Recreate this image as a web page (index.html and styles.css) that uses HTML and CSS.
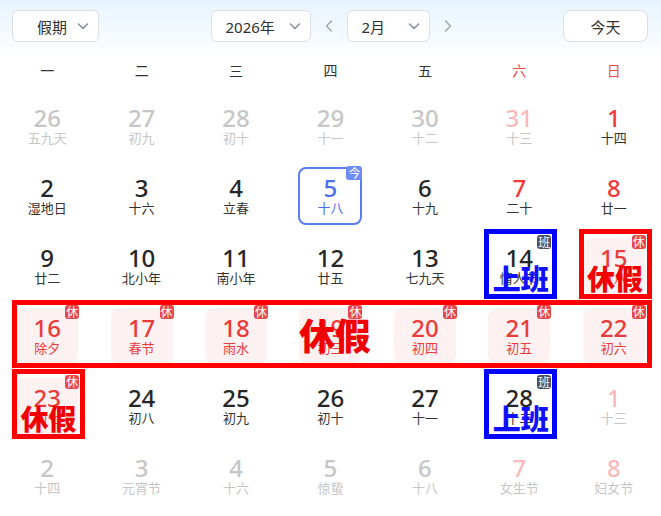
FILE: index.html
```html
<!DOCTYPE html>
<html lang="zh-CN">
<head>
<meta charset="utf-8">
<title>日历</title>
<link rel="stylesheet" href="styles.css">
</head>
<body>
<div class="page">
  <div class="toolbar">
    <div class="select sel-holiday"><span>假期</span><svg class="chev" viewBox="0 0 12 12"><polyline points="1.5,4 6,8.5 10.5,4"/></svg></div>
    <div class="nav">
      <div class="select sel-year"><span>2026年</span><svg class="chev" viewBox="0 0 12 12"><polyline points="1.5,4 6,8.5 10.5,4"/></svg></div>
      <svg class="arrow" viewBox="0 0 8 14"><polyline points="6.5,2 1.5,7 6.5,12"/></svg>
      <div class="select sel-month"><span>2月</span><svg class="chev" viewBox="0 0 12 12"><polyline points="1.5,4 6,8.5 10.5,4"/></svg></div>
      <svg class="arrow" viewBox="0 0 8 14"><polyline points="1.5,2 6.5,7 1.5,12"/></svg>
    </div>
    <div class="today-btn">今天</div>
  </div>

  <div class="weekdays">
    <div>一</div><div>二</div><div>三</div><div>四</div><div>五</div><div class="we">六</div><div class="we">日</div>
  </div>

  <div class="week">
    <div class="cell other"><div class="box"><div class="num">26</div><div class="lun">五九天</div></div></div>
    <div class="cell other"><div class="box"><div class="num">27</div><div class="lun">初九</div></div></div>
    <div class="cell other"><div class="box"><div class="num">28</div><div class="lun">初十</div></div></div>
    <div class="cell other"><div class="box"><div class="num">29</div><div class="lun">十一</div></div></div>
    <div class="cell other"><div class="box"><div class="num">30</div><div class="lun">十二</div></div></div>
    <div class="cell other weekend"><div class="box"><div class="num">31</div><div class="lun">十三</div></div></div>
    <div class="cell weekend"><div class="box"><div class="num">1</div><div class="lun">十四</div></div></div>
  </div>

  <div class="week">
    <div class="cell"><div class="box"><div class="num">2</div><div class="lun">湿地日</div></div></div>
    <div class="cell"><div class="box"><div class="num">3</div><div class="lun">十六</div></div></div>
    <div class="cell"><div class="box"><div class="num">4</div><div class="lun">立春</div></div></div>
    <div class="cell today"><div class="box"><div class="num">5</div><div class="lun">十八</div><span class="badge b-today">今</span></div></div>
    <div class="cell"><div class="box"><div class="num">6</div><div class="lun">十九</div></div></div>
    <div class="cell weekend"><div class="box"><div class="num">7</div><div class="lun">二十</div></div></div>
    <div class="cell weekend"><div class="box"><div class="num">8</div><div class="lun">廿一</div></div></div>
  </div>

  <div class="week">
    <div class="cell"><div class="box"><div class="num">9</div><div class="lun">廿二</div></div></div>
    <div class="cell"><div class="box"><div class="num">10</div><div class="lun">北小年</div></div></div>
    <div class="cell"><div class="box"><div class="num">11</div><div class="lun">南小年</div></div></div>
    <div class="cell"><div class="box"><div class="num">12</div><div class="lun">廿五</div></div></div>
    <div class="cell"><div class="box"><div class="num">13</div><div class="lun">七九天</div></div></div>
    <div class="cell work"><div class="box"><div class="num">14</div><div class="lun">情人节</div><span class="badge b-work">班</span></div><div class="mark mark-work">上班</div></div>
    <div class="cell holiday"><div class="box"><div class="num">15</div><div class="lun">廿八</div><span class="badge b-rest">休</span></div><div class="mark mark-rest">休假</div></div>
  </div>

  <div class="week">
    <div class="cell holiday"><div class="box"><div class="num">16</div><div class="lun">除夕</div><span class="badge b-rest">休</span></div></div>
    <div class="cell holiday"><div class="box"><div class="num">17</div><div class="lun">春节</div><span class="badge b-rest">休</span></div></div>
    <div class="cell holiday"><div class="box"><div class="num">18</div><div class="lun">雨水</div><span class="badge b-rest">休</span></div></div>
    <div class="cell holiday"><div class="box"><div class="num">19</div><div class="lun">初三</div><span class="badge b-rest">休</span></div></div>
    <div class="cell holiday"><div class="box"><div class="num">20</div><div class="lun">初四</div><span class="badge b-rest">休</span></div></div>
    <div class="cell holiday"><div class="box"><div class="num">21</div><div class="lun">初五</div><span class="badge b-rest">休</span></div></div>
    <div class="cell holiday"><div class="box"><div class="num">22</div><div class="lun">初六</div><span class="badge b-rest">休</span></div></div>
    <div class="rowmark">休假</div>
  </div>

  <div class="week">
    <div class="cell holiday"><div class="box"><div class="num">23</div><div class="lun">初七</div><span class="badge b-rest">休</span></div><div class="mark mark-rest">休假</div></div>
    <div class="cell"><div class="box"><div class="num">24</div><div class="lun">初八</div></div></div>
    <div class="cell"><div class="box"><div class="num">25</div><div class="lun">初九</div></div></div>
    <div class="cell"><div class="box"><div class="num">26</div><div class="lun">初十</div></div></div>
    <div class="cell"><div class="box"><div class="num">27</div><div class="lun">十一</div></div></div>
    <div class="cell work"><div class="box"><div class="num">28</div><div class="lun">十二</div><span class="badge b-work">班</span></div><div class="mark mark-work">上班</div></div>
    <div class="cell other weekend"><div class="box"><div class="num">1</div><div class="lun">十三</div></div></div>
  </div>

  <div class="week">
    <div class="cell other"><div class="box"><div class="num">2</div><div class="lun">十四</div></div></div>
    <div class="cell other"><div class="box"><div class="num">3</div><div class="lun">元宵节</div></div></div>
    <div class="cell other"><div class="box"><div class="num">4</div><div class="lun">十六</div></div></div>
    <div class="cell other"><div class="box"><div class="num">5</div><div class="lun">惊蛰</div></div></div>
    <div class="cell other"><div class="box"><div class="num">6</div><div class="lun">十八</div></div></div>
    <div class="cell other weekend"><div class="box"><div class="num">7</div><div class="lun">女生节</div></div></div>
    <div class="cell other weekend"><div class="box"><div class="num">8</div><div class="lun">妇女节</div></div></div>
  </div>
</div>
</body>
</html>
```

FILE: styles.css
```css
* { box-sizing: border-box; }
html, body { margin: 0; padding: 0; background: #ffffff; }
body {
  font-family: "Noto Sans", "Noto Sans CJK SC", sans-serif;
  color: #262626;
  width: 661px;
  height: 516px;
  overflow: hidden;
}
.page {
  width: 661px;
  background: linear-gradient(to bottom, #e7f4fd 0px, #f6fbff 40px, #ffffff 60px);
}

/* toolbar */
.toolbar {
  height: 52px;
  padding: 10px 13px 0 12px;
  display: flex;
  justify-content: space-between;
  align-items: flex-start;
}
.select {
  height: 32px;
  background: #ffffff;
  border: 1px solid #dcdfe6;
  border-radius: 6px;
  display: flex;
  align-items: center;
  justify-content: space-between;
  padding: 0 9px 0 14px;
  font-size: 15px;
  color: #303133;
}
.sel-holiday { width: 87px; padding-left: 24px; }
.sel-year { width: 100px; }
.sel-month { width: 83px; }
.chev {
  width: 12px;
  height: 12px;
  fill: none;
  stroke: #7d8899;
  stroke-width: 1.4;
  stroke-linecap: round;
  stroke-linejoin: round;
}
.nav {
  display: flex;
  align-items: center;
  gap: 14px;
  height: 32px;
}
.arrow {
  width: 8px;
  height: 14px;
  fill: none;
  stroke: #a0a4ab;
  stroke-width: 1.4;
  stroke-linecap: round;
  stroke-linejoin: round;
}
.today-btn {
  width: 85px;
  height: 32px;
  background: #ffffff;
  border: 1px solid #dcdfe6;
  border-radius: 8px;
  display: flex;
  align-items: center;
  justify-content: center;
  font-size: 15px;
  color: #303133;
}

/* weekdays */
.weekdays {
  display: grid;
  grid-template-columns: repeat(7, 1fr);
  height: 36px;
  margin-bottom: 3px;
  align-items: center;
  font-size: 14px;
  color: #333333;
}
.weekdays > div { text-align: center; }
.weekdays .we { color: #f04848; }

/* weeks */
.week {
  display: grid;
  grid-template-columns: repeat(7, 1fr);
  height: 70px;
  position: relative;
}
.cell {
  position: relative;
  display: flex;
  align-items: center;
  justify-content: center;
}
.box {
  position: relative;
  width: 62px;
  height: 56px;
  border-radius: 8px;
  display: flex;
  flex-direction: column;
  align-items: center;
  justify-content: center;
}
.num {
  font-size: 24px;
  line-height: 24px;
  font-weight: 500;
  color: #262626;
}
.lun {
  font-size: 13px;
  line-height: 16px;
  color: #333333;
}

.weekend .num { color: #f03a3a; }
.other .num { color: #c6c6c6; }
.other .lun { color: #c6c6c6; }
.other.weekend .num { color: #f7baba; }

.today .box {
  width: 64px;
  height: 58px;
  border: 2px solid #5b7cf0;
}
.today .num { color: #4d6ef0; }
.today .lun { color: #4d6ef0; }

.holiday .box { background: #fdf1f1; }
.holiday .num { color: #ea3b3b; }
.holiday .lun { color: #ea3b3b; }

.badge {
  position: absolute;
  top: -3px;
  right: -1px;
  height: 14px;
  min-width: 14px;
  padding: 0 1px;
  border-radius: 3px;
  font-size: 12px;
  line-height: 14px;
  color: #ffffff;
  text-align: center;
  font-family: "Noto Sans CJK SC", sans-serif;
}
.b-rest { background: #e8464a; }
.b-work { background: #4b5263; }
.b-today { background: #6d8cf5; right: -2px; width: 16px; }

/* annotations */
.mark {
  position: absolute;
  left: 12px;
  top: -2px;
  width: 73px;
  height: 70px;
  border: 5px solid;
  display: flex;
  align-items: flex-end;
  justify-content: center;
  padding-bottom: 2px;
  font-family: "Noto Sans CJK SC", sans-serif;
  font-size: 28px;
  line-height: 28px;
  font-weight: 900;
}
.mark-work { border-color: #0000ff; color: #1010ff; }
.mark-rest { border-color: #ff0000; color: #f00000; }

.rowmark {
  position: absolute;
  left: 12px;
  right: 9px;
  top: -1px;
  height: 68px;
  border: 5px solid #ff0000;
  display: flex;
  align-items: center;
  justify-content: center;
  padding-left: 6px;
  font-family: "Noto Sans CJK SC", sans-serif;
  font-size: 36px;
  line-height: 36px;
  font-weight: 900;
  color: #f00000;
}
```
